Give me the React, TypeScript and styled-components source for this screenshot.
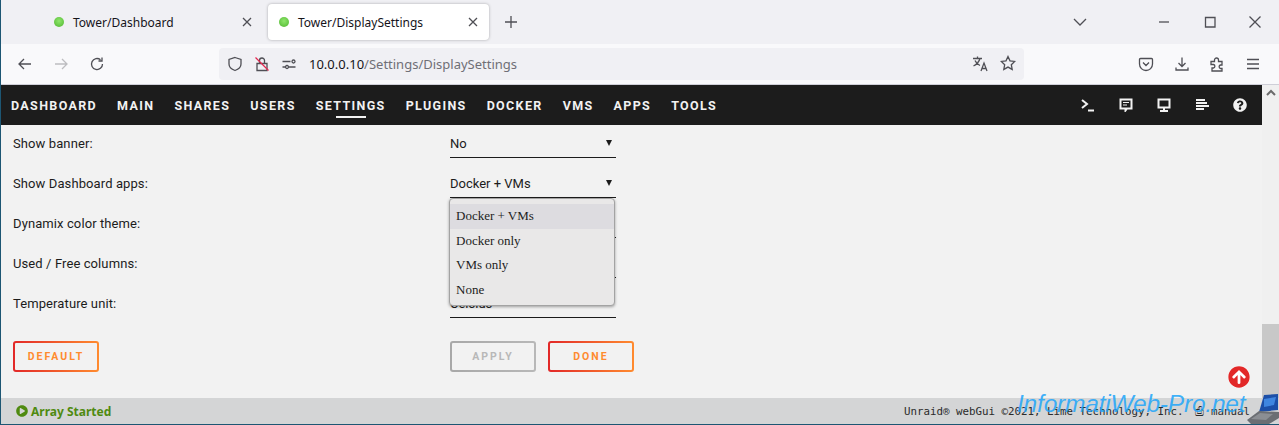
import React from "react";
import styled, { createGlobalStyle } from "styled-components";
import { FaArrowCircleUp, FaPlayCircle, FaQuestionCircle } from "react-icons/fa";

const GlobalStyle = createGlobalStyle`
  html, body {
    margin: 0;
    padding: 0;
    overflow: hidden;
  }
  * {
    box-sizing: border-box;
  }
`;

const Screen = styled.div`
  position: relative;
  width: 1279px;
  height: 425px;
  display: flex;
  flex-direction: column;
  overflow: hidden;
  background: #f2f2f2;
  border-left: 1px solid #1d5673;
  border-bottom: 1px solid #1d5673;
  font-family: Roboto, "Noto Sans", sans-serif;
  color: #1c1c1c;
`;

const TabBar = styled.div`
  height: 44px;
  flex: none;
  display: flex;
  align-items: center;
  padding-left: 41px;
  background: #f0f0f4;
`;

const Tab = styled.div<{ $active?: boolean }>`
  width: 221px;
  height: 36px;
  display: flex;
  align-items: center;
  padding: 0 8px 0 ${({ $active }) => ($active ? "11px" : "12px")};
  margin-right: ${({ $active }) => ($active ? "14px" : "5px")};
  border-radius: 4px;
  background: ${({ $active }) => ($active ? "#fff" : "transparent")};
  box-shadow: ${({ $active }) => ($active ? "0 0 3px rgba(0,0,0,.3)" : "none")};
  font: 12px "Noto Sans", sans-serif;
  color: #15141a;
`;

const Dot = styled.span`
  width: 10px;
  height: 10px;
  flex: none;
  margin-right: 9px;
  border-radius: 50%;
  background: radial-gradient(circle at 50% 40%, #8ee66b, #4fb52f);
`;

const TabTitle = styled.span`
  flex: 1;
`;

const Spacer = styled.div`
  flex: 1;
`;

const TabsMenu = styled.div`
  margin-right: 68px;
  display: flex;
`;

const WindowControls = styled.div`
  display: flex;
  gap: 29.5px;
  margin-right: 16px;
`;

const Toolbar = styled.div`
  height: 41px;
  flex: none;
  display: flex;
  align-items: center;
  background: #f9f9fb;
  border-bottom: 1px solid #cfcfd8;
  padding-left: 16px;
`;

const NavButtons = styled.div`
  display: flex;
  gap: 20px;
  width: 202px;
`;

const UrlBar = styled.div`
  width: 805px;
  height: 32px;
  display: flex;
  align-items: center;
  padding: 0 8px;
  border-radius: 4px;
  background: #f0f0f4;
`;

const UrlIcons = styled.div`
  display: flex;
  align-items: center;
  gap: 11px;
  margin-right: 12px;
`;

const UrlText = styled.div`
  flex: 1;
  font: 13px "Noto Sans", sans-serif;
  color: #6f6f76;
  strong {
    font-weight: 400;
    color: #15141a;
  }
`;

const UrlActions = styled.div`
  display: flex;
  gap: 10px;
`;

const ToolActions = styled.div`
  display: flex;
  margin-left: 114px;
  gap: 19.5px;
`;

const Middle = styled.div`
  flex: 1;
  min-height: 0;
  display: flex;
`;

const Page = styled.div`
  flex: 1;
  min-width: 0;
  display: flex;
  flex-direction: column;
`;

const Nav = styled.nav`
  height: 40px;
  flex: none;
  display: flex;
  align-items: center;
  padding: 0 15px 0 10px;
  background: #1c1c1c;
`;

const NavItem = styled.a<{ $active?: boolean }>`
  position: relative;
  margin-right: 20px;
  font: 700 12.5px Roboto, sans-serif;
  letter-spacing: 1.35px;
  color: #f2f2f2;
  &::after {
    content: "";
    display: ${({ $active }) => ($active ? "block" : "none")};
    position: absolute;
    left: 20px;
    right: 20px;
    bottom: -5px;
    height: 2px;
    background: #f2f2f2;
  }
`;

const NavIcons = styled.div`
  margin-left: auto;
  display: flex;
  align-items: center;
  gap: 24px;
  color: #f2f2f2;
  svg {
    display: block;
  }
`;

const Content = styled.div`
  flex: 1;
  padding-left: 12px;
  margin-top: -1px;
`;

const Row = styled.div`
  position: relative;
  height: 40px;
  display: flex;
  align-items: flex-start;
`;

const Label = styled.div`
  width: 437px;
  padding-top: 12px;
  font-size: 13px;
  line-height: 15px;
  letter-spacing: 0.1px;
`;

const Select = styled.div`
  width: 166px;
  height: 34px;
  display: flex;
  align-items: center;
  justify-content: space-between;
  padding: 5px 4px 0 0;
  border-bottom: 1px solid #1c1c1c;
  font-size: 13px;
`;

const Caret = styled.span`
  width: 0;
  height: 0;
  border-left: 3px solid transparent;
  border-right: 3px solid transparent;
  border-top: 6px solid #1c1c1c;
`;

const Dropdown = styled.ul`
  position: absolute;
  z-index: 2;
  top: 34px;
  left: 436px;
  width: 166px;
  height: 108px;
  margin: 0;
  padding: 5px 0 0;
  list-style: none;
  background: #e9e8e8;
  border: 1px solid #a3a3a3;
  border-radius: 4px;
  box-shadow: 0 1px 3px rgba(0, 0, 0, 0.35);
  font: 13px "Liberation Serif", serif;
`;

const Option = styled.li<{ $hover?: boolean }>`
  height: 24.6px;
  display: flex;
  align-items: center;
  padding-left: 6px;
  background: ${({ $hover }) => ($hover ? "#dddce0" : "transparent")};
  color: #1c1c1c;
`;

const ButtonRow = styled.div`
  display: flex;
  margin-top: 17px;
`;

const Action = styled.button<{ $off?: boolean }>`
  width: 86px;
  height: 31px;
  padding: 0;
  border: 2px solid transparent;
  border-radius: 3px;
  background: ${({ $off }) =>
    $off
      ? "linear-gradient(#f2f2f2, #f2f2f2) padding-box, linear-gradient(90deg, #a8a8a8, #b8b8b8) border-box"
      : "linear-gradient(#f2f2f2, #f2f2f2) padding-box, linear-gradient(90deg, #e22828, #ff8b2f) border-box"};
  color: ${({ $off }) => ($off ? "#b8b8b8" : "#ff8b2f")};
  font: 700 10.5px Roboto, sans-serif;
  letter-spacing: 2px;
`;

const LeftAction = styled.div`
  width: 437px;
`;

const RightActions = styled.div`
  display: flex;
  gap: 12px;
`;

const Scrollbar = styled.div`
  width: 17px;
  flex: none;
  display: flex;
  flex-direction: column;
  align-items: stretch;
  background: #f0f0f0;
`;

const ScrollArrow = styled.div`
  height: 15px;
  display: flex;
  align-items: center;
  justify-content: center;
`;

const ScrollThumb = styled.div`
  margin-top: auto;
  height: 74px;
  background: #c8c8c8;
`;

const Footer = styled.footer`
  height: 26px;
  flex: none;
  display: flex;
  align-items: center;
  padding: 0 29px 0 15px;
  background: #d4d5d6;
`;

const Status = styled.div`
  display: flex;
  align-items: center;
  gap: 3px;
  font: 700 12px "Noto Sans", sans-serif;
  color: #4f8a10;
`;

const Copy = styled.div`
  margin-left: auto;
  font: 10.8px "DejaVu Sans Mono", monospace;
  color: #2b2b2b;
`;

const Manual = styled.span`
  margin-left: 12px;
`;

const ToTop = styled.div`
  position: absolute;
  right: 29px;
  bottom: 36px;
  color: #e22828;
  background: #fff;
  width: 22px;
  height: 22px;
  border-radius: 50%;
  display: flex;
  svg {
    display: block;
  }
`;

const Watermark = styled.div`
  position: absolute;
  left: 1016px;
  top: 390px;
  font: italic 24.5px "Liberation Sans", sans-serif;
  letter-spacing: -0.2px;
  color: rgba(30, 165, 250, 0.85);
`;

const Laptop = styled.svg`
  position: absolute;
  right: 0;
  bottom: 0;
`;

const Ico = styled.svg`
  display: block;
  flex: none;
  fill: none;
  stroke: #4f4f55;
  stroke-width: 1.3;
`;

const Icon = ({ d, dim }: { d: string; dim?: boolean }) => (
  <Ico width="16" height="16" viewBox="0 0 16 16" style={dim ? { opacity: 0.35 } : undefined}>
    <path d={d} />
  </Ico>
);

const pages = ["DASHBOARD", "MAIN", "SHARES", "USERS", "SETTINGS", "PLUGINS", "DOCKER", "VMS", "APPS", "TOOLS"];
const options = ["Docker + VMs", "Docker only", "VMs only", "None"];

export default function App() {
  return (
    <Screen>
      <GlobalStyle />
      <TabBar>
        <Tab>
          <Dot />
          <TabTitle>Tower/Dashboard</TabTitle>
          <Icon d="M4 4l8 8M12 4l-8 8" />
        </Tab>
        <Tab $active>
          <Dot />
          <TabTitle>Tower/DisplaySettings</TabTitle>
          <Icon d="M4 4l8 8M12 4l-8 8" />
        </Tab>
        <Icon d="M8 2v12M2 8h12" />
        <Spacer />
        <TabsMenu>
          <Icon d="M2 5l6 6 6-6" />
        </TabsMenu>
        <WindowControls>
          <Icon d="M3 8h10" />
          <Icon d="M3.500 3.500h9.500v9.500H3.500z" />
          <Icon d="M2.500 2.500l11 11M13.500 2.500l-11 11" />
        </WindowControls>
      </TabBar>
      <Toolbar>
        <NavButtons>
          <Icon d="M14 8H2M7 3L2 8l5 5" />
          <Icon dim d="M2 8h12M9 3l5 5-5 5" />
          <Icon d="M13.500 8A5.500 5.500 0 1 1 11.500 3.800M13 1.500v3.500H9.500" />
        </NavButtons>
        <UrlBar>
          <UrlIcons>
            <Icon d="M8 1.500l6 2v4.500c0 3.500-3 5.500-6 6.500-3-1-6-3-6-6.500V3.500z" />
            <Ico width="16" height="16" viewBox="0 0 16 16">
              <path d="M3 7.500h10v7H3zM5.500 7.500V4.500a2.500 2.500 0 0 1 5 0v3" />
              <path d="M1.500 1.500l13 13" stroke="#e22850" />
            </Ico>
            <Icon d="M1.500 5.500h8M1.500 11h3M8 11h6.500M12.500 4a1.500 1.500 0 1 0 .01 0M6 9.500a1.500 1.500 0 1 0 .01 0" />
          </UrlIcons>
          <UrlText>
            <strong>10.0.0.10</strong>/Settings/DisplaySettings
          </UrlText>
          <UrlActions>
            <Ico width="18" height="18" viewBox="0 0 18 18">
              <path d="M1 3.500h9M5.500 1.500v2M8 3.500C7 7 4.500 9.500 1.500 11M3 5.500c1 2.500 3 4 5 5M9 16l3-8 3 8M10 13.500h4" />
            </Ico>
            <Icon d="M8 1.500l2 4.300 4.700.6-3.400 3.300.9 4.700L8 12.100l-4.200 2.300.9-4.700L1.300 6.400l4.700-.6z" />
          </UrlActions>
        </UrlBar>
        <ToolActions>
          <Icon d="M2.500 2.500h11a1 1 0 0 1 1 1V8a6.500 6.500 0 0 1-13 0V3.500a1 1 0 0 1 1-1zM5 6.500l3 3 3-3" />
          <Icon d="M8 1.500v9M4.500 7l3.500 3.500L11.500 7M2 11.500v2.500h12v-2.500" />
          <Icon d="M2 5.500h3.500V4a2 2 0 0 1 4 0v1.500H13v3.500h-1.500a1.800 1.800 0 0 0 0 3.500H13V15H3v-3h1.500a1.800 1.800 0 0 0 0-3.500H2z" />
          <Icon d="M2 3.500h12M2 8h12M2 12.500h12" />
        </ToolActions>
      </Toolbar>
      <Middle>
        <Page>
          <Nav>
            {pages.map((page) => (
              <NavItem key={page} $active={page === "SETTINGS"}>
                {page}
              </NavItem>
            ))}
            <NavIcons>
              <svg width="14" height="14" viewBox="0 0 14 14" fill="none" stroke="currentColor" strokeWidth="2">
                <path d="M1 2l5 4-5 4M7 12.500h6" />
              </svg>
              <svg width="14" height="14" viewBox="0 0 14 14" fill="none" stroke="currentColor">
                <path strokeWidth="2" d="M1.500 1.500h11v9H8L6.500 12.500V10.500H1.500z" />
                <path d="M4 4.500h6M4 7h4" />
              </svg>
              <svg width="14" height="14" viewBox="0 0 14 14" fill="none" stroke="currentColor">
                <path strokeWidth="2" d="M1.500 1.500h11v8h-11z" />
                <path strokeWidth="2" d="M7 10v2M3 13h8" />
              </svg>
              <svg width="14" height="14" viewBox="0 0 14 14" fill="none" stroke="currentColor" strokeWidth="2">
                <path d="M1 2h9M1 5h11M1 8h13M1 11h8" />
              </svg>
              <FaQuestionCircle size={14} />
            </NavIcons>
          </Nav>
          <Content>
            <Row>
              <Label>Show banner:</Label>
              <Select>
                No
                <Caret />
              </Select>
            </Row>
            <Row>
              <Label>Show Dashboard apps:</Label>
              <Select>
                Docker + VMs
                <Caret />
              </Select>
              <Dropdown>
                {options.map((option, i) => (
                  <Option key={option} $hover={i === 0}>
                    {option}
                  </Option>
                ))}
              </Dropdown>
            </Row>
            <Row>
              <Label>Dynamix color theme:</Label>
              <Select>
                Black
                <Caret />
              </Select>
            </Row>
            <Row>
              <Label>Used / Free columns:</Label>
              <Select>
                Text
                <Caret />
              </Select>
            </Row>
            <Row>
              <Label>Temperature unit:</Label>
              <Select>
                Celsius
                <Caret />
              </Select>
            </Row>
            <ButtonRow>
              <LeftAction>
                <Action type="button">DEFAULT</Action>
              </LeftAction>
              <RightActions>
                <Action type="button" $off>
                  APPLY
                </Action>
                <Action type="button">DONE</Action>
              </RightActions>
            </ButtonRow>
          </Content>
        </Page>
        <Scrollbar>
          <ScrollArrow>
            <svg width="10" height="7" viewBox="0 0 10 7" fill="none" stroke="#6b6b6b" strokeWidth="2">
              <path d="M1 6l4-4 4 4" />
            </svg>
          </ScrollArrow>
          <ScrollThumb />
        </Scrollbar>
      </Middle>
      <Footer>
        <Status>
          <FaPlayCircle size={12} />
          Array Started
        </Status>
        <Copy>
          Unraid® webGui ©2021, Lime Technology, Inc.<Manual>⎙ manual</Manual>
        </Copy>
      </Footer>
      <ToTop>
        <FaArrowCircleUp size={22} />
      </ToTop>
      <Watermark>InformatiWeb-Pro.net</Watermark>
      <Laptop width="32" height="32" viewBox="0 0 32 32">
        <path d="M12 20L17 3l14-1v16z" fill="#1c4fa8" />
        <path d="M17 7l12-2-2 8-10 2z" fill="#3f86e0" />
        <path d="M0 28l12-9 20 1v6l-10 6H4z" fill="#6b6e73" />
        <path d="M4 27l9-6 13 1-7 6z" fill="#8b8e93" />
      </Laptop>
    </Screen>
  );
}
